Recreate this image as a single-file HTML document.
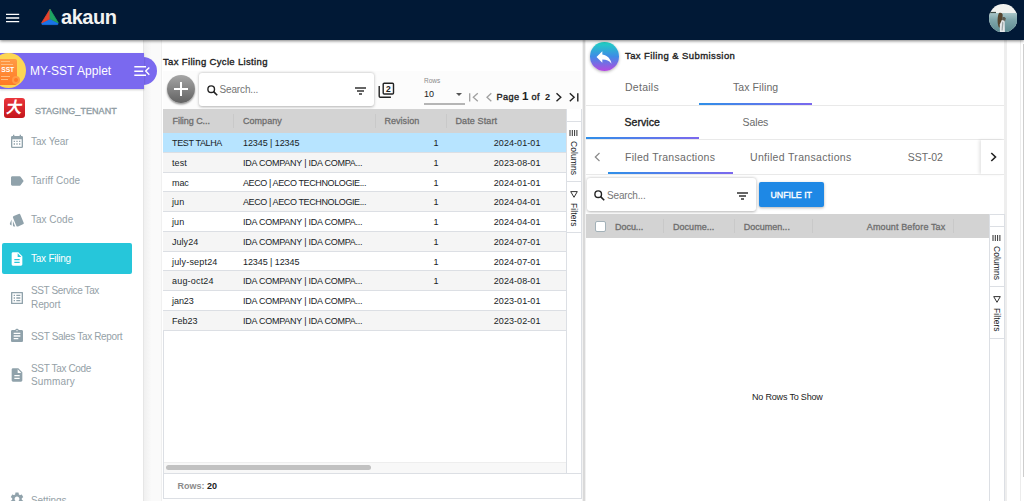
<!DOCTYPE html>
<html><head><meta charset="utf-8">
<style>
*{box-sizing:border-box;margin:0;padding:0}
html,body{width:1024px;height:501px;overflow:hidden;background:#fff;font-family:"Liberation Sans",sans-serif;color:#222}
.abs{position:absolute}
.t{position:absolute;white-space:nowrap}
#hdr{position:absolute;left:0;top:0;width:1024px;height:40px;background:#011936;box-shadow:0 1px 3px rgba(0,0,0,.5);z-index:10}
#side{position:absolute;left:0;top:40px;width:144px;height:461px;background:#fff;border-right:1px solid #e6e6e6}
#gap{position:absolute;left:144px;top:40px;width:17px;height:461px;background:linear-gradient(90deg,#f0f0f0,#fafafa 45%,#fafafa)}
.mi{position:absolute;left:31px;font-size:10px;color:#95a1a7;line-height:14px;white-space:nowrap}
.ic{position:absolute;left:9px;width:16px;height:16px;fill:#90a2ab}
#p1{position:absolute;left:161px;top:40px;width:421px;height:461px;background:#fff}
#p2{position:absolute;left:586px;top:40px;width:421px;height:461px;background:#fff;border-right:3px solid #eee}
.row{position:absolute;left:163px;width:403px;height:19.750px;border-bottom:1px solid #dcdfe4;font-size:9px;line-height:20px;color:#181d1f}
.row.odd{background:#fff}.row.even{background:#f5f5f5}.row.sel{background:#b7e4ff}
.row span{position:absolute;top:0;white-space:nowrap}
.c1{left:9px}.c2{left:80px}.c3{left:270.500px}.c4{right:25.500px}
.hd{font-size:9px;color:#6e6e6e;-webkit-text-stroke:.3px #6e6e6e;position:absolute;white-space:nowrap}
.sep{position:absolute;width:1px;height:14px;background:#c9c9c9}
.vt{position:absolute;writing-mode:vertical-rl;font-size:8.500px;color:#181d1f;white-space:nowrap;line-height:10px}
.ul{position:absolute;height:2px;background:linear-gradient(90deg,#2f8fe8,#7b68ee)}
.hl{position:absolute;height:1px;background:#e9e9e9}
.tab{position:absolute;font-size:10.500px;color:#6a6a6a;white-space:nowrap}
.md{font-weight:normal!important;-webkit-text-stroke:.35px currentColor}
#applet{letter-spacing:0.04px}#btn{letter-spacing:-0.01px}#g1{letter-spacing:-0.04px}#g2{letter-spacing:0.03px}#g3{letter-spacing:0.02px}#g4{letter-spacing:0.13px}#h1{letter-spacing:-0.05px}#h2{letter-spacing:0.03px}#h3{letter-spacing:0.03px}#h4{letter-spacing:0.12px}#logo{letter-spacing:-0.46px}#m1{letter-spacing:-0.11px}#m2{letter-spacing:0.10px}#m3{letter-spacing:0.00px}#m4{letter-spacing:-0.23px}#m5{letter-spacing:-0.37px}#m5b{letter-spacing:-0.09px}#m6{letter-spacing:-0.34px}#m7{letter-spacing:-0.34px}#m7b{letter-spacing:0.17px}#m8{letter-spacing:-0.08px}#norows{letter-spacing:-0.18px}#pg{letter-spacing:0.41px}#pgof{letter-spacing:0.36px}#r0a{letter-spacing:-0.35px}#r0b{letter-spacing:-0.08px}#r0d{letter-spacing:0.07px}#r1a{letter-spacing:0.12px}#r1b{letter-spacing:-0.25px}#r1d{letter-spacing:0.07px}#r2a{letter-spacing:-0.09px}#r2b{letter-spacing:-0.39px}#r2d{letter-spacing:0.07px}#r3a{letter-spacing:0.08px}#r3b{letter-spacing:-0.39px}#r3d{letter-spacing:0.07px}#r4a{letter-spacing:0.08px}#r4b{letter-spacing:-0.25px}#r4d{letter-spacing:0.07px}#r5a{letter-spacing:0.04px}#r5b{letter-spacing:-0.25px}#r5d{letter-spacing:0.07px}#r6a{letter-spacing:0.18px}#r6b{letter-spacing:-0.08px}#r6d{letter-spacing:0.07px}#r7a{letter-spacing:0.19px}#r7b{letter-spacing:-0.25px}#r7d{letter-spacing:0.07px}#r8a{letter-spacing:-0.06px}#r8b{letter-spacing:-0.25px}#r8d{letter-spacing:0.07px}#r9a{letter-spacing:-0.01px}#r9b{letter-spacing:-0.25px}#r9d{letter-spacing:0.07px}#s1{letter-spacing:-0.14px}#s2{letter-spacing:-0.17px}#tb1{letter-spacing:0.27px}#tb2{letter-spacing:0.09px}#tb3{letter-spacing:0.07px}#tb4{letter-spacing:-0.10px}#tb5{letter-spacing:0.28px}#tb6{letter-spacing:0.32px}#tb7{letter-spacing:0.04px}#tenant{letter-spacing:0.07px}#title1{letter-spacing:0.34px}#title2{letter-spacing:0.41px}#v1{letter-spacing:0.07px}#v2{letter-spacing:0.08px}#v3{letter-spacing:0.07px}#v4{letter-spacing:0.08px}
</style></head><body>
<div id="hdr">
 <svg class="abs" style="left:5.600px;top:13px" width="14" height="10" viewBox="0 0 14 10"><path d="M0 1.400h13.200M0 5h13.200M0 8.700h13.200" stroke="#fff" stroke-width="1.300"/></svg>
 <svg class="abs" style="left:40px;top:8px" width="20" height="18" viewBox="0 0 20 18"><g stroke-linejoin="round" stroke-width=".8"><path d="M1.800 15.300L10 11l8 4.300-.3 1.300H2.100z" fill="#1a73e8" stroke="#1a73e8"/><path d="M10 1.300L1.600 14.900 10 10.750z" fill="#e8432e" stroke="#e8432e"/><path d="M10 1.300l8.300 13.600L10 10.750z" fill="#1ea362" stroke="#1ea362"/></g></svg>
 <div class="t" id="logo" style="left:61px;top:3.700px;font-size:20px;font-weight:bold;color:#f2f2f2;line-height:26px">akaun</div>
 <svg class="abs" style="left:988.800px;top:3.600px" width="28.500" height="28.500" viewBox="0 0 28.500 28.500"><defs><clipPath id="av"><circle cx="14.250" cy="14.250" r="14.250"/></clipPath><linearGradient id="sea" x1="0" y1="0" x2="0" y2="1"><stop offset="0" stop-color="#a9c6c8"/><stop offset=".35" stop-color="#7fa6ab"/><stop offset="1" stop-color="#5b898f"/></linearGradient><filter id="bl"><feGaussianBlur stdDeviation=".35"/></filter></defs><g clip-path="url(#av)"><rect width="28.500" height="28.500" fill="#f1f2ef"/><rect y="9" width="28.500" height="19.500" fill="url(#sea)"/><g filter="url(#bl)"><rect x="1" y="7.900" width="6" height="1.200" fill="#3d4b45"/><path d="M9.800 9.300c1.800-1 3.600-.3 3.900 1.500l-.4 5-1 7.500-2.300.2c-1.600-3-2-9.500-.2-14.200z" fill="#57452f"/><path d="M13.300 13.300c1.500-.9 3.300-.2 3.500 1.300l-.8 2.800-2.700 1z" fill="#5a5a50"/><path d="M10.800 20.500l2-4.500 2.800.8.300 11.200h-5z" fill="#e6e8ea"/><path d="M13.200 17.500l1.300 1-.8 8h-1.200z" fill="#9aa5a5"/></g></g></svg>
</div>
<div id="side"></div><div id="gap"></div><div class="abs" style="left:161px;top:40px;width:1px;height:461px;background:#f0f0f0;z-index:1"></div>
<!-- applet pill -->
<div class="abs" style="left:128px;top:56.500px;width:28.500px;height:28.500px;background:#7a69ef;border-radius:50%"></div>
<div class="abs" style="left:0;top:53px;width:143.500px;height:35.500px;background:#7a69ef;box-shadow:0 1px 2px rgba(0,0,0,.2)"></div>
<div class="abs" style="left:-9px;top:53px;width:35px;height:35px;border-radius:50%;background:#fdd653"></div>
<div class="abs" style="left:0;top:58.500px;width:16.500px;height:26px;background:linear-gradient(#ff9a45,#ff7a25);border-radius:0 2px 2px 0"></div>
<div class="abs" style="left:1px;top:61px;width:9px;height:1px;background:#ffbd80"></div>
<div class="abs" style="left:1px;top:63.500px;width:12px;height:1px;background:#ffbd80"></div>
<div class="abs" style="left:1px;top:76px;width:9px;height:1px;background:#ffbd80"></div>
<div class="abs" style="left:1px;top:79px;width:7px;height:1px;background:#ffbd80"></div>
<div class="abs" style="left:12px;top:76px;width:8px;height:8px;border-radius:50%;background:#ff7a25;border:2px solid #ff9a45"></div>
<div class="t" style="left:1.300px;top:65.500px;font-size:6.700px;font-weight:bold;color:#fff;letter-spacing:-.1px">SST</div>
<div class="t" id="applet" style="left:30px;top:63.500px;font-size:12px;color:#fff">MY-SST Applet</div>
<svg class="abs" style="left:134px;top:65px" width="17" height="12" viewBox="0 0 17 12"><path d="M.3 1.750h11.700M.3 6.250h8.900M.3 10.250h11.700" stroke="#fff" stroke-width="1.500" fill="none"/><path d="M15.300 2.400l-3.600 3.700 3.600 3.700" stroke="#fff" stroke-width="1.400" fill="none"/></svg>
<!-- tenant -->
<div class="abs" style="left:4px;top:98px;width:21px;height:20px;background:linear-gradient(#ea353c,#c4161c);border-radius:3px"></div>
<div class="t" style="left:4px;top:98px;width:21px;height:20px;line-height:19px;text-align:center;font-size:16px;font-weight:bold;color:#fff;font-family:'Liberation Sans','Noto Sans CJK SC',sans-serif;transform:skewX(-10deg)">大</div>
<div class="t md" id="tenant" style="left:35px;top:105.500px;font-size:9px;color:#909da4">STAGING_TENANT</div>
<!-- menu -->
<svg class="ic" style="top:134px" viewBox="0 0 24 24"><path d="M19 3h-1V1h-2v2H8V1H6v2H5a2 2 0 0 0-2 2v14a2 2 0 0 0 2 2h14a2 2 0 0 0 2-2V5a2 2 0 0 0-2-2zm0 16H5V8h14zM7 10h2v2H7zm4 0h2v2h-2zm4 0h2v2h-2zm-8 4h2v2H7zm4 0h2v2h-2zm4 0h2v2h-2z"/></svg>
<div class="mi" id="m1" style="top:135px">Tax Year</div>
<svg class="ic" style="top:173px" viewBox="0 0 24 24"><path d="M17.630 5.840C17.270 5.330 16.670 5 16 5L5 5.010C3.900 5.010 3 5.900 3 7v10c0 1.100.9 1.990 2 1.990L16 19c.67 0 1.270-.33 1.630-.84L22 12z"/></svg>
<div class="mi" id="m2" style="top:174px">Tariff Code</div>
<svg class="ic" style="top:212px" viewBox="0 0 24 24"><path d="M2.530 19.650l1.340.56v-9.030l-2.430 5.860c-.41 1.020.08 2.190 1.090 2.610zm19.500-3.700L17.070 3.980a2.013 2.013 0 0 0-2.600-1.080L7.100 5.950c-.75.310-1.210 1.030-1.230 1.800-.01.270.04.540.15.800l4.960 11.970a1.998 1.998 0 0 0 2.600 1.080l7.360-3.050a1.994 1.994 0 0 0 1.090-2.600zM5.880 19.750c0 1.100.9 2 2 2h1.450l-3.450-8.340z"/></svg>
<div class="mi" id="m3" style="top:213px">Tax Code</div>
<div class="abs" style="left:2px;top:243px;width:130px;height:31px;background:#26c6da;border-radius:2px"></div>
<svg class="ic" style="top:250.500px;fill:#fff" viewBox="0 0 24 24"><path d="M14 2H6c-1.100 0-1.990.9-1.990 2L4 20c0 1.100.89 2 1.990 2H18c1.100 0 2-.9 2-2V8zm2 16H8v-2h8zm0-4H8v-2h8zm-3-5V3.500L18.500 9z"/></svg>
<div class="mi" id="m4" style="top:252px;color:#fff">Tax Filing</div>
<svg class="ic" style="top:289.500px" viewBox="0 0 24 24"><path d="M11 7h6v2h-6zm0 4h6v2h-6zm0 4h6v2h-6zM7 7h2v2H7zm0 4h2v2H7zm0 4h2v2H7zM20.100 3H3.900c-.5 0-.9.400-.9.900v16.200c0 .4.400.9.900.9h16.200c.4 0 .9-.5.9-.9V3.900c0-.5-.5-.9-.9-.9zM19 19H5V5h14z"/></svg>
<div class="mi" id="m5" style="top:283.500px">SST Service Tax</div>
<div class="mi" id="m5b" style="top:297.500px">Report</div>
<svg class="ic" style="top:328px" viewBox="0 0 24 24"><path d="M19 3h-4.180C14.400 1.840 13.300 1 12 1s-2.400.84-2.820 2H5c-1.100 0-2 .9-2 2v14c0 1.100.9 2 2 2h14c1.100 0 2-.9 2-2V5c0-1.100-.9-2-2-2zm-7 0c.55 0 1 .45 1 1s-.45 1-1 1-1-.45-1-1 .45-1 1-1zm2 14H7v-2h7zm3-4H7v-2h10zm0-4H7V7h10z"/></svg>
<div class="mi" id="m6" style="top:330px">SST Sales Tax Report</div>
<svg class="ic" style="top:367px" viewBox="0 0 24 24"><path d="M14 2H6c-1.100 0-1.990.9-1.990 2L4 20c0 1.100.89 2 1.990 2H18c1.100 0 2-.9 2-2V8zm2 16H8v-2h8zm0-4H8v-2h8zm-3-5V3.500L18.500 9z"/></svg>
<div class="mi" id="m7" style="top:361.500px">SST Tax Code</div>
<div class="mi" id="m7b" style="top:375px">Summary</div>
<svg class="ic" style="top:491px" viewBox="0 0 24 24"><path d="M19.140 12.940c.04-.3.060-.61.060-.94 0-.32-.020-.64-.070-.94l2.030-1.580a.49.49 0 0 0 .12-.61l-1.920-3.320a.488.488 0 0 0-.59-.22l-2.390.96c-.5-.38-1.030-.7-1.620-.94l-.36-2.540a.484.484 0 0 0-.48-.41h-3.840c-.24 0-.43.170-.47.410l-.36 2.540c-.59.240-1.130.570-1.620.94l-2.390-.96c-.22-.080-.47 0-.59.220L2.740 8.870c-.12.210-.08.470.12.610l2.030 1.580c-.05.3-.09.630-.09.940s.02.640.07.940l-2.030 1.580a.49.49 0 0 0-.12.610l1.920 3.320c.12.220.37.290.59.220l2.390-.96c.5.380 1.030.7 1.620.94l.36 2.540c.05.240.24.410.48.410h3.840c.24 0 .44-.17.470-.41l.36-2.540c.59-.24 1.130-.56 1.620-.94l2.390.96c.22.080.47 0 .59-.22l1.920-3.320c.12-.22.070-.47-.12-.61zM12 15.600c-1.980 0-3.600-1.620-3.600-3.600s1.620-3.600 3.600-3.600 3.600 1.620 3.600 3.600-1.620 3.600-3.600 3.600z"/></svg>
<div class="mi" id="m8" style="top:493.500px">Settings</div>

<!-- panel 1 -->
<div id="p1"></div>
<div class="t md" id="title1" style="left:163px;top:56px;font-size:9.500px;color:#222;font-weight:bold">Tax Filing Cycle Listing</div>
<div class="abs" style="left:163px;top:71px;width:418px;height:38px;background:#fcfcfc"></div>
<div class="abs" style="left:167px;top:75px;width:28px;height:28px;border-radius:50%;background:linear-gradient(#a6a6a6,#626262);box-shadow:0 1.500px 2px rgba(0,0,0,.4)"></div>
<svg class="abs" style="left:174px;top:82px" width="14" height="14" viewBox="0 0 14 14"><path d="M7 0v14M0 7h14" stroke="#fff" stroke-width="2"/></svg>
<div class="abs" style="left:199px;top:72.500px;width:175px;height:33.500px;background:#fff;border-radius:3px;box-shadow:0 .5px 3px rgba(0,0,0,.3)"></div>
<svg class="abs" style="left:206.700px;top:84.800px" width="11" height="11" viewBox="0 0 11 11"><circle cx="4.200" cy="4.200" r="3.300" stroke="#222" stroke-width="1.400" fill="none"/><path d="M6.600 6.600l3.600 3.600" stroke="#222" stroke-width="1.600"/></svg>
<div class="t" id="s1" style="left:219.500px;top:84px;font-size:10px;color:#757575">Search...</div>
<svg class="abs" style="left:355px;top:87px" width="11" height="8" viewBox="0 0 11 8"><path d="M0 1h11M2 4h7M4 7h3" stroke="#333" stroke-width="1.300"/></svg>
<svg class="abs" style="left:377.500px;top:81.500px" width="17" height="17" viewBox="0 0 17 17"><rect x="5.200" y="1.200" width="10.300" height="10.800" rx="1" fill="none" stroke="#222" stroke-width="1.400"/><path d="M1.200 4v10.300a1 1 0 0 0 1 1h10.700" fill="none" stroke="#222" stroke-width="1.400"/><text x="10.350" y="9.600" font-size="8.500" font-weight="bold" text-anchor="middle" font-family="Liberation Sans,sans-serif" fill="#222">2</text></svg>
<div class="t" id="rowsl" style="left:424px;top:77px;font-size:6.500px;color:#8a8a8a">Rows</div>
<div class="t" id="ten" style="left:424px;top:89px;font-size:9px;color:#222">10</div>
<div class="abs" style="left:455.500px;top:93px;width:0;height:0;border:3.300px solid transparent;border-top:3.500px solid #555"></div>
<div class="abs" style="left:424px;top:103px;width:41px;height:1.500px;background:#b5b5b5"></div>
<svg class="abs" style="left:468px;top:92px" width="112" height="11" viewBox="0 0 112 11"><g fill="none" stroke="#a0a0a0" stroke-width="1.300"><path d="M1.700 1.200v8.200"/><path d="M9.800 1.300L5.300 5.300l4.500 4"/><path d="M23.300 1.300L19 5.300l4.300 4"/></g><g fill="none" stroke="#222" stroke-width="1.400"><path d="M88.500 1.300l4.300 4-4.300 4"/><path d="M101.800 1.300l4.300 4-4.300 4"/><path d="M109.800 1.200v8.200"/></g></svg>
<div class="t md" id="pg" style="left:496.500px;top:91.500px;font-size:9.200px;color:#222;font-weight:bold">Page</div>
<div class="t" style="left:522px;top:89.700px;font-size:11.500px;color:#222;font-weight:bold">1</div>
<div class="t md" id="pgof" style="left:531.500px;top:91.500px;font-size:9.200px;color:#222;font-weight:bold">of</div>
<div class="t" style="left:545px;top:91.500px;font-size:9.200px;color:#222;font-weight:bold">2</div>
<!-- grid -->
<div class="abs" style="left:163px;top:109px;width:419px;height:365px;border:1px solid #dcdfe4;border-top:none"></div>
<div class="abs" style="left:163px;top:109px;width:403px;height:24px;background:#d3d3d3"></div>
<div class="hd" id="h1" style="left:172.500px;top:116px">Filing C...</div>
<div class="hd" id="h2" style="left:243px;top:116px">Company</div>
<div class="hd" id="h3" style="left:384.500px;top:116px">Revision</div>
<div class="hd" id="h4" style="left:455.500px;top:116px">Date Start</div>
<div class="sep" style="left:233px;top:114px"></div>
<div class="sep" style="left:375px;top:114px"></div>
<div class="sep" style="left:446px;top:114px"></div>
<div class="row sel" style="top:133.00px"><span class="c1" id="r0a">TEST TALHA</span><span class="c2" id="r0b">12345 | 12345</span><span class="c3">1</span><span class="c4" id="r0d">2024-01-01</span></div>
<div class="row even" style="top:152.75px"><span class="c1" id="r1a">test</span><span class="c2" id="r1b">IDA COMPANY | IDA COMPA...</span><span class="c3">1</span><span class="c4" id="r1d">2023-08-01</span></div>
<div class="row odd" style="top:172.50px"><span class="c1" id="r2a">mac</span><span class="c2" id="r2b">AECO | AECO TECHNOLOGIE...</span><span class="c3">1</span><span class="c4" id="r2d">2024-01-01</span></div>
<div class="row even" style="top:192.25px"><span class="c1" id="r3a">jun</span><span class="c2" id="r3b">AECO | AECO TECHNOLOGIE...</span><span class="c3">1</span><span class="c4" id="r3d">2024-04-01</span></div>
<div class="row odd" style="top:212.00px"><span class="c1" id="r4a">jun</span><span class="c2" id="r4b">IDA COMPANY | IDA COMPA...</span><span class="c3">1</span><span class="c4" id="r4d">2024-04-01</span></div>
<div class="row even" style="top:231.75px"><span class="c1" id="r5a">July24</span><span class="c2" id="r5b">IDA COMPANY | IDA COMPA...</span><span class="c3">1</span><span class="c4" id="r5d">2024-07-01</span></div>
<div class="row odd" style="top:251.50px"><span class="c1" id="r6a">july-sept24</span><span class="c2" id="r6b">12345 | 12345</span><span class="c3">1</span><span class="c4" id="r6d">2024-07-01</span></div>
<div class="row even" style="top:271.25px"><span class="c1" id="r7a">aug-oct24</span><span class="c2" id="r7b">IDA COMPANY | IDA COMPA...</span><span class="c3">1</span><span class="c4" id="r7d">2024-08-01</span></div>
<div class="row odd" style="top:291.00px"><span class="c1" id="r8a">jan23</span><span class="c2" id="r8b">IDA COMPANY | IDA COMPA...</span><span class="c3"></span><span class="c4" id="r8d">2023-01-01</span></div>
<div class="row even" style="top:310.75px"><span class="c1" id="r9a">Feb23</span><span class="c2" id="r9b">IDA COMPANY | IDA COMPA...</span><span class="c3"></span><span class="c4" id="r9d">2023-02-01</span></div>

<!-- side bar of grid -->
<div class="abs" style="left:566px;top:109px;width:15px;height:365px;border-left:1px solid #dcdfe4;background:#fff"></div>
<div class="abs" style="left:566px;top:121px;width:15px;height:1px;background:#dcdfe4"></div>
<div class="abs" style="left:566px;top:181px;width:15px;height:1px;background:#dcdfe4"></div>
<div class="abs" style="left:566px;top:232px;width:15px;height:1px;background:#dcdfe4"></div>
<svg class="abs" style="left:569px;top:130px" width="9" height="6" viewBox="0 0 9 6"><path d="M1 0v6M3.300 0v6M5.600 0v6M7.900 0v6" stroke="#333" stroke-width="1"/></svg>
<div class="vt" id="v1" style="left:568.500px;top:141px">Columns</div>
<svg class="abs" style="left:570px;top:190.500px" width="8" height="7" viewBox="0 0 8 7"><path d="M.7 .6h6.600L4 6.300z" stroke="#333" fill="none" stroke-width="1"/></svg>
<div class="vt" id="v2" style="left:568.500px;top:203px">Filters</div>
<!-- hscroll -->
<div class="abs" style="left:164px;top:462px;width:402px;height:12px;background:#f8f8f8;border-top:1px solid #eee"></div>
<div class="abs" style="left:166px;top:465px;width:205px;height:5px;border-radius:3px;background:#c1c1c1"></div>
<div class="abs" style="left:163px;top:473px;width:419px;height:26px;border:1px solid #dcdfe4;background:#fff"></div>
<div class="t" id="rows20" style="left:177.500px;top:481px;font-size:9px;color:#8b8b8b;font-weight:bold">Rows: <b style="color:#222">20</b></div>
<div class="abs" style="left:582px;top:40px;width:4px;height:461px;background:#f1f1f1"></div>
<div class="abs" style="left:583px;top:40px;width:1.500px;height:461px;background:#d9d9d9"></div>

<!-- panel 2 -->
<div id="p2"></div>
<div class="abs" style="left:590px;top:42px;width:28.500px;height:28.500px;border-radius:50%;background:linear-gradient(#1fd3c2,#3f8be6 50%,#b549e0);box-shadow:0 1px 3px rgba(0,0,0,.3)"></div>
<svg class="abs" style="left:594px;top:46.500px" width="20" height="20" viewBox="0 0 24 24"><path d="M10 9V5l-7 7 7 7v-4.100c5 0 8.500 1.600 11 5.100-1-5-4-10-11-11z" fill="#fff"/></svg>
<div class="t md" id="title2" style="left:625px;top:49.500px;font-size:9.500px;font-weight:bold;color:#222">Tax Filing &amp; Submission</div>
<div class="tab" id="tb1" style="left:625px;top:81px">Details</div>
<div class="tab" id="tb2" style="left:733px;top:81px">Tax Filing</div>
<div class="ul" style="left:699px;top:103px;width:113px"></div>
<div class="hl" style="left:586px;top:105px;width:418px"></div>
<div class="tab md" id="tb3" style="left:624.500px;top:116px;color:#222;font-weight:bold">Service</div>
<div class="tab" id="tb4" style="left:742.500px;top:116px">Sales</div>
<div class="ul" style="left:586px;top:137px;width:113px"></div>
<div class="hl" style="left:586px;top:139px;width:418px"></div>
<svg class="abs" style="left:594px;top:152px" width="7" height="10" viewBox="0 0 7 10"><path d="M5.500 1L1.300 5l4.200 4" fill="none" stroke="#8a8a8a" stroke-width="1.200"/></svg>
<div class="tab" id="tb5" style="left:625px;top:151px">Filed Transactions</div>
<div class="tab" id="tb6" style="left:750px;top:151px">Unfiled Transactions</div>
<div class="tab" id="tb7" style="left:907.700px;top:151px">SST-02</div>
<div class="abs" style="left:981px;top:140px;width:23px;height:34px;background:#fff;box-shadow:-2px 0 3px rgba(0,0,0,.1)"></div>
<svg class="abs" style="left:990px;top:152px" width="7" height="10" viewBox="0 0 7 10"><path d="M1.300 1l4.200 4-4.200 4" fill="none" stroke="#222" stroke-width="1.600"/></svg>
<div class="ul" style="left:608px;top:172px;width:125px"></div>
<div class="hl" style="left:586px;top:174px;width:418px"></div>
<div class="abs" style="left:587px;top:178px;width:169px;height:33px;background:#fff;border-radius:3px;box-shadow:0 .5px 3px rgba(0,0,0,.3)"></div>
<svg class="abs" style="left:594px;top:190px" width="11" height="11" viewBox="0 0 11 11"><circle cx="4.200" cy="4.200" r="3.300" stroke="#222" stroke-width="1.400" fill="none"/><path d="M6.600 6.600l3.600 3.600" stroke="#222" stroke-width="1.600"/></svg>
<div class="t" id="s2" style="left:607px;top:189.500px;font-size:10px;color:#757575">Search...</div>
<svg class="abs" style="left:737px;top:192px" width="11" height="8" viewBox="0 0 11 8"><path d="M0 1h11M2 4h7M4 7h3" stroke="#333" stroke-width="1.300"/></svg>
<div class="abs" style="left:759px;top:182px;width:65px;height:25px;background:#1e88e5;border-radius:2px;box-shadow:0 1px 3px rgba(0,0,0,.3)"></div>
<div class="t md" id="btn" style="left:770.500px;top:189.500px;color:#fff;font-size:8.800px;font-weight:bold">UNFILE IT</div>
<div class="abs" style="left:586px;top:214px;width:403px;height:24px;background:#d3d3d3"></div>
<div class="abs" style="left:595px;top:221px;width:11px;height:11px;background:#fff;border:1px solid #a3b1b8;border-radius:2px"></div>
<div class="hd" id="g1" style="left:615px;top:221.500px">Docu...</div>
<div class="hd" id="g2" style="left:673px;top:221.500px">Docume...</div>
<div class="hd" id="g3" style="left:743.700px;top:221.500px">Documen...</div>
<div class="hd" id="g4" style="left:866.800px;top:221.500px">Amount Before Tax</div>
<div class="sep" style="left:663px;top:219px"></div>
<div class="sep" style="left:734px;top:219px"></div>
<div class="sep" style="left:812px;top:219px"></div>
<div class="sep" style="left:953px;top:219px"></div>
<div class="abs" style="left:989px;top:214px;width:16px;height:287px;border-left:1px solid #dcdfe4;border-right:1px solid #dcdfe4;border-top:1px solid #dcdfe4;background:#fff"></div>
<div class="abs" style="left:989px;top:226px;width:15px;height:1px;background:#dcdfe4"></div>
<div class="abs" style="left:989px;top:286px;width:15px;height:1px;background:#dcdfe4"></div>
<div class="abs" style="left:989px;top:338px;width:15px;height:1px;background:#dcdfe4"></div>
<svg class="abs" style="left:992px;top:235px" width="9" height="6" viewBox="0 0 9 6"><path d="M1 0v6M3.300 0v6M5.600 0v6M7.900 0v6" stroke="#333" stroke-width="1"/></svg>
<div class="vt" id="v3" style="left:991.500px;top:246px">Columns</div>
<svg class="abs" style="left:993px;top:295.500px" width="8" height="7" viewBox="0 0 8 7"><path d="M.7 .6h6.600L4 6.300z" stroke="#333" fill="none" stroke-width="1"/></svg>
<div class="vt" id="v4" style="left:991.500px;top:308px">Filters</div>
<div class="t" id="norows" style="left:752px;top:392px;font-size:9px;color:#222">No Rows To Show</div>
<div class="abs" style="left:1020px;top:40px;width:1px;height:461px;background:#ececec"></div>
<div class="abs" style="left:1022.500px;top:44px;width:2px;height:433px;background:#cdcdcd"></div>
</body></html>
